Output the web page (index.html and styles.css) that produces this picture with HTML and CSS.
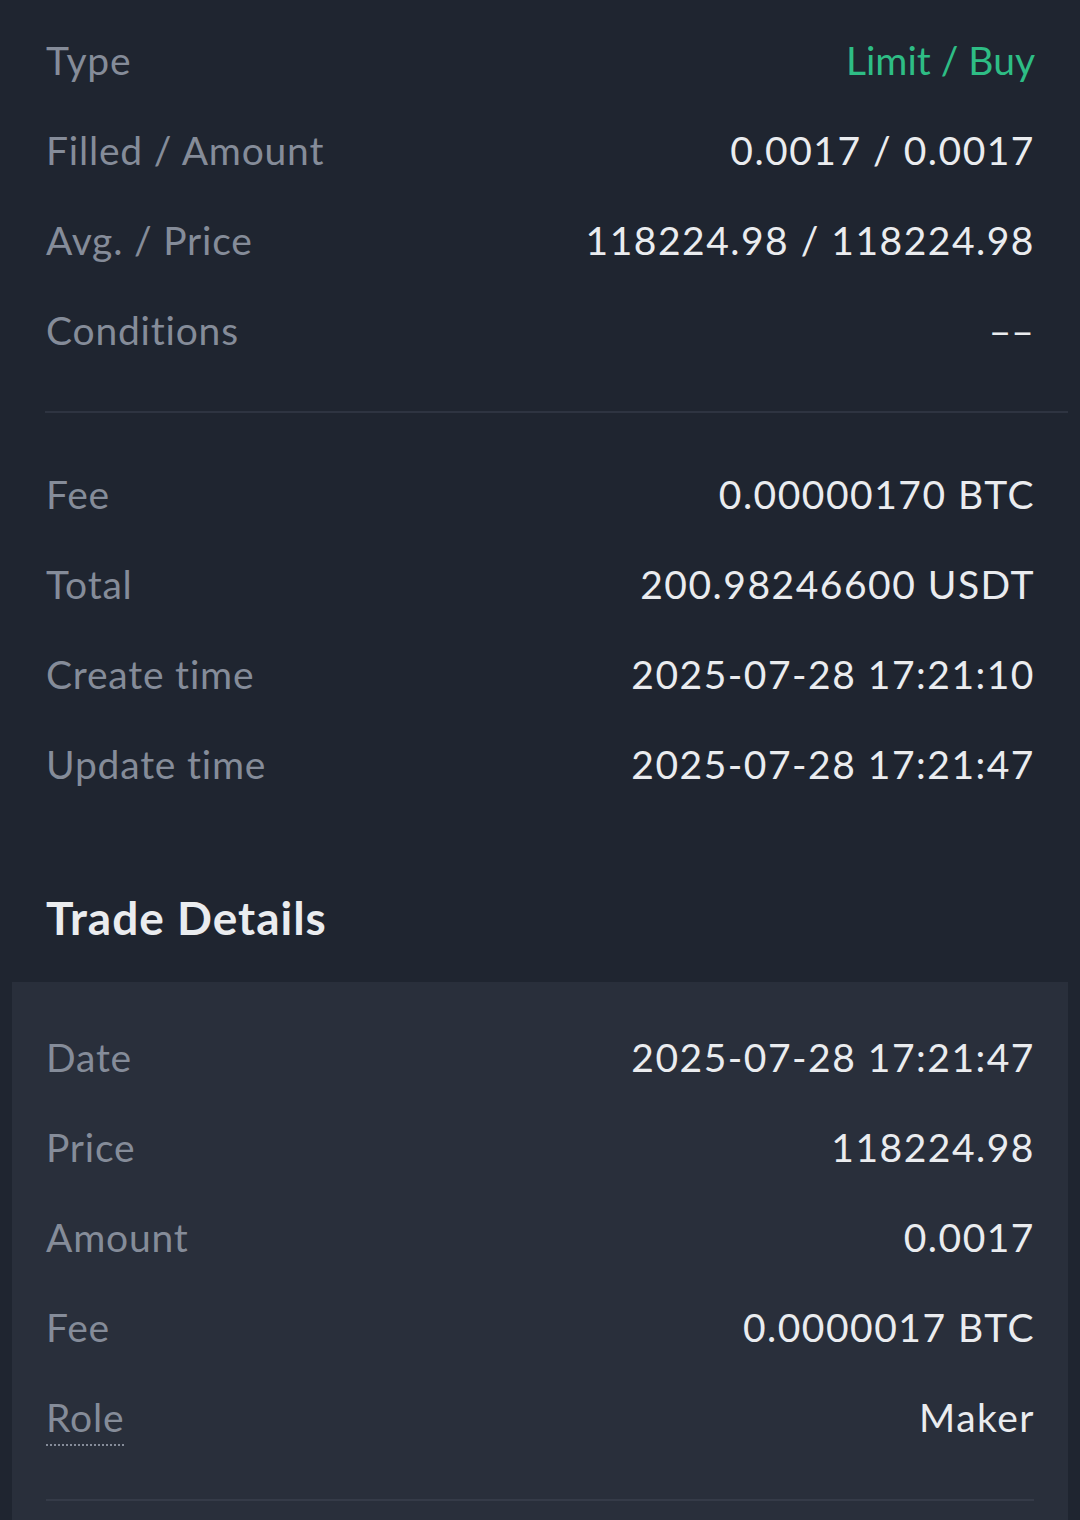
FILE: index.html
```html
<!DOCTYPE html>
<html>
<head>
  <title>Order Details</title>
  <link rel="stylesheet" href="styles.css">
</head>
<body>
  <div class="page">
    <div class="section top">
      <div class="row"><span class="label">Type</span><span class="value buy">Limit / Buy</span></div>
      <div class="row"><span class="label">Filled / Amount</span><span class="value">0.0017 / 0.0017</span></div>
      <div class="row"><span class="label">Avg. / Price</span><span class="value">118224.98 / 118224.98</span></div>
      <div class="row"><span class="label">Conditions</span><span class="value empty">––</span></div>
    </div>
    <div class="divider wide"></div>
    <div class="section">
      <div class="row"><span class="label">Fee</span><span class="value">0.00000170 BTC</span></div>
      <div class="row"><span class="label">Total</span><span class="value">200.98246600 USDT</span></div>
      <div class="row"><span class="label">Create time</span><span class="value">2025-07-28 17:21:10</span></div>
      <div class="row"><span class="label">Update time</span><span class="value">2025-07-28 17:21:47</span></div>
    </div>

    <h2 class="title">Trade Details</h2>

    <div class="card">
      <div class="row"><span class="label">Date</span><span class="value">2025-07-28 17:21:47</span></div>
      <div class="row"><span class="label">Price</span><span class="value">118224.98</span></div>
      <div class="row"><span class="label">Amount</span><span class="value">0.0017</span></div>
      <div class="row"><span class="label">Fee</span><span class="value">0.0000017 BTC</span></div>
      <div class="row"><span class="label tip">Role</span><span class="value">Maker</span></div>
      <div class="divider"></div>
    </div>
  </div>
</body>
</html>
```

FILE: styles.css
```css
html, body {
  margin: 0;
  background-color: #1f2530;
}

body {
  font-family: "Lato", "Noto Sans", sans-serif;
  color: #eaecef;
}

.page {
  padding-top: 15px;
}

.section {
  padding: 0 46px;
}

.row {
  display: flex;
  justify-content: space-between;
  align-items: center;
  height: 90px;
  font-size: 39px;
}

.label {
  color: #858c99;
  letter-spacing: 0.8px;
}

.value {
  color: #eaecef;
  letter-spacing: 1.5px;
  margin-right: -1px;
}

.value.buy {
  color: #2ebd85;
  letter-spacing: 0;
}

.value.empty {
  letter-spacing: 0;
  margin-right: 0;
}

.label.tip {
  position: relative;
}

  .label.tip::after {
    content: "";
    position: absolute;
    left: 0;
    right: 0;
    bottom: -6px;
    border-bottom: 2px dotted #858c99;
  }

.divider {
  height: 2px;
  background-color: #2e3441;
}

  .divider.wide {
    margin: 36px 12px 36px 45px;
  }

.title {
  margin: 0;
  padding: 83px 46px 0;
  height: 90px;
  line-height: 52px;
  font-size: 46px;
  font-weight: 700;
  letter-spacing: 1px;
  color: #eaecef;
}

.card {
  margin: 0 12px;
  padding: 30px 34px 20px;
  background-color: #292f3b;
}

  .card .divider {
    margin-top: 37px;
    background-color: #353b48;
  }
```
